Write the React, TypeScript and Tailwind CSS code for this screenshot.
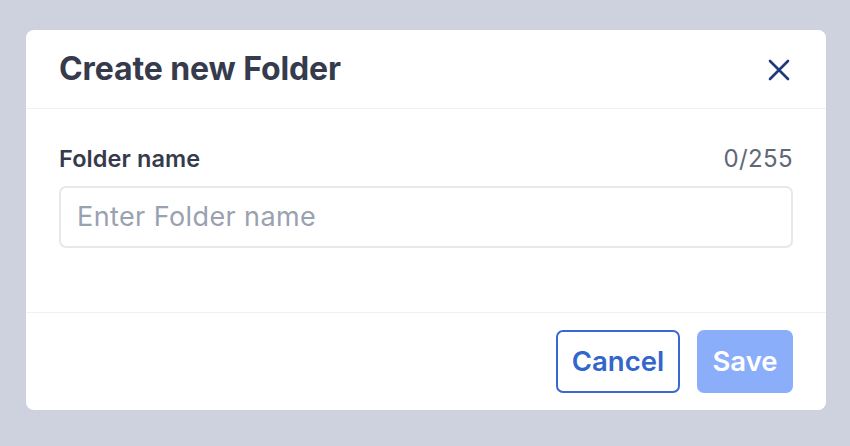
import React from "react";

export default function App() {
  return (
    <div
      className="w-[850px] h-[446px] bg-[#cdd2de] pt-[30px] pl-[26px] overflow-hidden"
      style={{ fontFamily: "Inter, 'Noto Sans', sans-serif" }}
    >
      <div className="w-[800px] h-[380px] bg-white rounded-[8px] flex flex-col">
        <div className="h-[79px] flex items-center justify-between pl-[33px] pr-[36px] border-b border-[#eff0f5]">
          <h2 className="text-[32px] leading-[40px] font-bold text-[#353b4c] tracking-[-0.1px]">Create new Folder</h2>
          <svg width="22" height="22" viewBox="0 0 22 22" className="mt-[1px]">
            <path d="M2 2 L20 20 M20 2 L2 20" stroke="#1f3a7a" strokeWidth="2.6" strokeLinecap="round" />
          </svg>
        </div>
        <div className="flex-1 px-[33px] pt-[36px] flex flex-col">
          <div className="flex items-center justify-between h-[28px]">
            <label className="text-[23.5px] leading-[28px] font-semibold text-[#353b4c] tracking-[0.1px]">Folder name</label>
            <span className="text-[24px] leading-[28px] text-[#5f6779] tracking-[0.4px]">0/255</span>
          </div>
          <div className="mt-[13px] h-[62px] border-2 border-[#e6e8ec] rounded-[7px] flex items-center pl-[16px]">
            <input
              className="w-full outline-none text-[27px] tracking-[0.4px] text-[#353b4c] placeholder:text-[#9aa1b0] bg-transparent"
              placeholder="Enter Folder name"
            />
          </div>
        </div>
        <div className="h-[98px] border-t border-[#eff0f5] flex items-center justify-end gap-[17px] pr-[33px]">
          <button className="w-[124px] h-[63px] border-2 border-[#3a68d2] rounded-[7px] text-[27.5px] font-semibold text-[#3366cc] bg-white">
            Cancel
          </button>
          <button className="w-[96px] h-[63px] rounded-[7px] text-[27.5px] font-semibold text-white bg-[#8aaef9]">
            Save
          </button>
        </div>
      </div>
    </div>
  );
}
